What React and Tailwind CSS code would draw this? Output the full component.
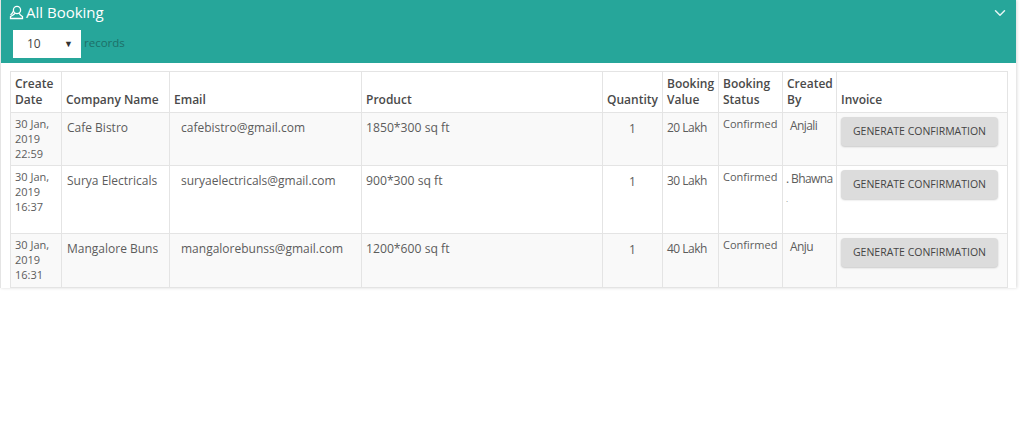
import React from 'react';
import { ChevronDown } from 'lucide-react';

const bookings = [
  { date: ['30 Jan,', '2019', '22:59'], company: 'Cafe Bistro', email: 'cafebistro@gmail.com', product: '1850*300 sq ft', value: '20 Lakh', by: 'Anjali', rowClass: 'h-[53px] bg-[#f9f9f9]' },
  { date: ['30 Jan,', '2019', '16:37'], company: 'Surya Electricals', email: 'suryaelectricals@gmail.com', product: '900*300 sq ft', value: '30 Lakh', by: 'Bhawna', rowClass: 'h-[68px] bg-white' },
  { date: ['30 Jan,', '2019', '16:31'], company: 'Mangalore Buns', email: 'mangalorebunss@gmail.com', product: '1200*600 sq ft', value: '40 Lakh', by: 'Anju', rowClass: 'h-[54px] bg-[#f9f9f9]' },
];

const thClass = 'border border-[#e4e4e4] px-1 pb-1 align-bottom text-left text-xs font-semibold leading-4 text-[#4a4a4a]';
const tdClass = 'border border-[#e4e4e4] align-top text-[#5c5c5c]';

const UserIcon = () => (
  <svg width="15" height="15" viewBox="0 0 15 15" fill="none" stroke="currentColor" strokeWidth="1.3" className="mr-0.5">
    <circle cx="8" cy="5" r="3.6" />
    <path d="M5.8 8.2 C5 10 3 10.5 1.5 11.5 L1.5 13.5 L13.5 13.5 L13.5 11.5 C12 10.5 11 10 10.2 8.2" />
    <path d="M4.5 6 C3.5 8 3 9 1.5 10" />
  </svg>
);

const App = () => {
  return (
    <div className="h-[431px] w-[1024px] overflow-hidden bg-white font-['Open_Sans',sans-serif]">
      <div className="h-[288px] w-[1016px] border-l border-[#e4e4e4] shadow-[1px_0_3px_rgba(0,0,0,0.15)]">
        <div className="h-[63px] bg-[#26a69a] pl-2 pr-2 pt-[3px]">
          <div className="flex items-start justify-between">
            <div className="flex h-[18px] items-center text-white">
              <UserIcon />
              <span className="text-[15px] leading-[18px]">All Booking</span>
            </div>
            <ChevronDown size={18} strokeWidth={2} className="mt-px -mr-px text-[#e6f5f3]" />
          </div>
          <div className="mt-2 ml-1 flex items-center">
            <div className="flex h-7 w-[68px] items-center justify-between bg-white pl-3.5 pr-2 text-xs text-[#444]">
              <span>10</span>
              <span className="text-[9px] text-[#333]">▼</span>
            </div>
            <span className="ml-[3px] -mt-0.5 text-[11.5px] text-[#1d6f68]">records</span>
          </div>
        </div>

        <div className="pl-[9px] pt-2">
          <table className="w-[997px] table-fixed border-collapse">
            <colgroup>
              <col className="w-[51px]" />
              <col className="w-[108px]" />
              <col className="w-[192px]" />
              <col className="w-[241px]" />
              <col className="w-[60px]" />
              <col className="w-[56px]" />
              <col className="w-[64px]" />
              <col className="w-[54px]" />
              <col className="w-[171px]" />
            </colgroup>
            <thead>
              <tr className="h-[41px]">
                <th className={thClass}>Create Date</th>
                <th className={thClass}>Company Name</th>
                <th className={thClass}>Email</th>
                <th className={thClass}>Product</th>
                <th className={thClass}>Quantity</th>
                <th className={thClass}>Booking Value</th>
                <th className={thClass}>Booking Status</th>
                <th className={thClass}>Created By</th>
                <th className={thClass}>Invoice</th>
              </tr>
            </thead>
            <tbody>
              {bookings.map((row) => (
                <tr key={row.email} className={row.rowClass}>
                  <td className={`${tdClass} px-1 pt-[3px] text-[11px] leading-[15px]`}>
                    {row.date.map((line) => <div key={line}>{line}</div>)}
                  </td>
                  <td className={`${tdClass} pl-[5px] pt-[7px] text-xs leading-4`}>{row.company}</td>
                  <td className={`${tdClass} pl-[11px] pt-[7px] text-xs leading-4`}>{row.email}</td>
                  <td className={`${tdClass} pl-1 pt-[7px] text-[12.2px] leading-4`}>{row.product}</td>
                  <td className={`${tdClass} pt-2 text-center text-xs leading-4`}>1</td>
                  <td className={`${tdClass} pl-1 pt-[7px] text-xs leading-4 tracking-[-0.5px]`}>{row.value}</td>
                  <td className={`${tdClass} pl-1 pt-[3px] text-[11px] leading-4`}>Confirmed</td>
                  <td className={`${tdClass} pl-[7px] pt-[5px] text-xs leading-4 tracking-[-0.6px]`}>
                    {row.by === 'Bhawna' ? (
                      <>
                        <div className="-ml-1">. Bhawna</div>
                        <div className="-ml-1 mt-1 text-[8px] text-[#888]">.</div>
                      </>
                    ) : row.by}
                  </td>
                  <td className={`${tdClass} pl-1 pt-1`}>
                    <button className="h-[29px] w-[157px] rounded-sm bg-[#dcdcdc] text-[10.5px] font-medium text-[#444] shadow-[0_1px_2px_rgba(0,0,0,0.2)]">
                      GENERATE CONFIRMATION
                    </button>
                  </td>
                </tr>
              ))}
            </tbody>
          </table>
        </div>
      </div>
    </div>
  );
};

export default App;
